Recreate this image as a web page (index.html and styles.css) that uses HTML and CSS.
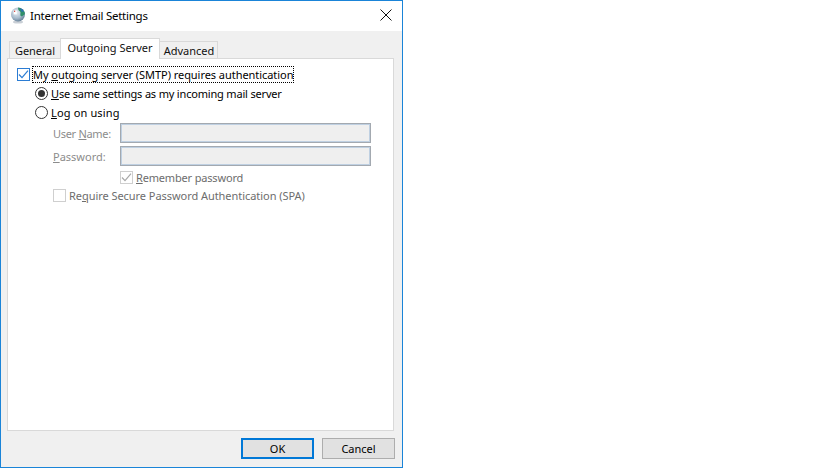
FILE: index.html
```html
<!DOCTYPE html>
<html lang="en">
<head>
<meta charset="utf-8">
<title>Internet Email Settings</title>
<link rel="stylesheet" href="styles.css">
</head>
<body>
<div class="window">
  <header class="titlebar">
    <svg class="app-icon" width="18" height="18" viewBox="0 0 18 18">
      <defs>
        <radialGradient id="globe" cx="0.4" cy="0.35" r="0.75">
          <stop offset="0" stop-color="#e8eef4"/>
          <stop offset="0.55" stop-color="#a9bccd"/>
          <stop offset="1" stop-color="#4f6c86"/>
        </radialGradient>
      </defs>
      <ellipse cx="9" cy="16" rx="5" ry="1.5" fill="#c9cfd6"/>
      <circle cx="9" cy="8.5" r="7" fill="url(#globe)"/>
      <path d="M9 1.6a7 7 0 0 1 6.9 6.4l-3 2.4-1.6-1 .2-3.4L9.4 4z" fill="#2f8f6a"/>
      <path d="M11 2a7 7 0 0 1 4 3.4l-2.4.4z" fill="#2b6fb5"/>
      <rect x="4.6" y="4.4" width="3.2" height="4" fill="#fff"/>
      <rect x="5" y="4.6" width="1.2" height="1.4" fill="#d9534f"/>
    </svg>
    <span class="title">Internet Email Settings</span>
    <svg class="close" width="12" height="12" viewBox="0 0 12 12">
      <path d="M.5.5l11 11M11.5.5l-11 11" stroke="#111" stroke-width="1" fill="none"/>
    </svg>
  </header>
  <main class="body">
    <nav class="tabs">
      <span class="tab tab-general">General</span>
      <span class="tab tab-outgoing active">Outgoing Server</span>
      <span class="tab tab-advanced">Advanced</span>
    </nav>
    <section class="panel">
      <div class="row row-auth">
        <span class="check">
          <svg width="11" height="11" viewBox="0 0 11 11"><path d="M1 5.5l3 3.2L10 1.6" stroke="#2b7cd3" stroke-width="1.2" fill="none"/></svg>
        </span>
        <span class="label focus">My <u>o</u>utgoing server (SMTP) requires authentication</span>
      </div>
      <div class="row row-radio">
        <span class="radio selected"></span>
        <span class="label label-same"><u>U</u>se same settings as my incoming mail server</span>
      </div>
      <div class="row row-radio">
        <span class="radio"></span>
        <span class="label label-logon"><u>L</u>og on using</span>
      </div>
      <div class="row row-field">
        <span class="field-label"><span class="label-user">User <u>N</u>ame:</span></span>
        <span class="input"></span>
      </div>
      <div class="row row-field">
        <span class="field-label"><u>P</u>assword:</span>
        <span class="input"></span>
      </div>
      <div class="row row-remember">
        <span class="check disabled">
          <svg width="11" height="11" viewBox="0 0 11 11"><path d="M1 5.5l3 3.2L10 1.6" stroke="#a8a8a8" stroke-width="1.2" fill="none"/></svg>
        </span>
        <span class="label muted label-remember"><u>R</u>emember password</span>
      </div>
      <div class="row row-spa">
        <span class="check disabled"></span>
        <span class="label muted label-spa">Re<u>q</u>uire Secure Password Authentication (SPA)</span>
      </div>
    </section>
    <footer class="actions">
      <button class="btn default" type="button">OK</button>
      <button class="btn" type="button">Cancel</button>
    </footer>
  </main>
</div>
</body>
</html>
```
FILE: styles.css
```css
* { box-sizing: border-box; }
html, body { margin: 0; height: 100%; background: #fff; }
body { font-family: "Noto Sans", "Open Sans", sans-serif; font-size: 11px; color: #000; overflow: hidden; }
.window { width: 403px; height: 468px; border: 1px solid #1a84d8; display: flex; flex-direction: column; }
.titlebar { height: 30px; flex: none; background: #fff; display: flex; align-items: center; padding: 0 10px 2px 8px; }
.app-icon { flex: none; }
.title { margin-left: 3px; font-size: 11.5px; letter-spacing: -0.25px; flex: 1; }
.body { flex: 1; background: #f0f0f0; display: flex; flex-direction: column; padding: 8px 8px 8px 6px; min-height: 0; }
.tabs { display: flex; height: 19px; padding-left: 2px; align-items: flex-end; flex: none; position: relative; z-index: 1; }
.tab { height: 17px; border: 1px solid #d9d9d9; border-bottom: 0; background: #f0f0f0; line-height: 17px; margin-left: -1px; color: #111; text-align: center; white-space: nowrap; }
.tab:first-child { margin-left: 0; }
.tab-general { width: 52px; letter-spacing: -0.1px; }
.tab-outgoing { width: 100px; }
.tab-advanced { width: 59px; padding-left: 1px; }
.tab.active { height: 21px; background: #fff; line-height: 18px; margin-bottom: -1px; position: relative; z-index: 2; }
.panel { flex: 1; background: #fff; border: 1px solid #d9d9d9; padding: 6px 9px 0; display: flex; flex-direction: column; min-height: 0; }
.row { display: flex; align-items: center; }
.row-auth { height: 18px; }
.row-radio { height: 19px; padding-left: 18px; margin-top: 1px; }
.row-radio + .row-radio { margin-top: 0; }
.check { width: 13px; height: 13px; border: 1px solid #2b7cd3; background: #fff; flex: none; display: flex; align-items: center; justify-content: center; }
.check.disabled { border-color: #cfcfcf; }
.check.disabled svg { display: block; }
.radio { width: 13px; height: 13px; border: 1px solid #333; border-radius: 50%; background: #fff; flex: none; position: relative; }
.radio.selected::after { content: ""; position: absolute; inset: 2px; border-radius: 50%; background: #333; }
.label { margin-left: 3px; white-space: nowrap; }
.focus { outline: 1px dotted #000; letter-spacing: -0.05px; }
.label-same { letter-spacing: -0.18px; }
.label-logon { letter-spacing: 0.15px; }
.label-remember { letter-spacing: -0.17px; }
.label-spa { letter-spacing: -0.05px; }
.label-user { letter-spacing: -0.3px; }
.muted { color: #6d6d6d; }
.row-field { padding-left: 36px; height: 22px; }
.row-field + .row-field { margin-top: 1px; }
.field-label { width: 67px; color: #8c8c8c; flex: none; white-space: nowrap; }
.input { width: 251px; height: 20px; background: #efefef; border: 1px solid #a3a9b0; box-shadow: inset 0 0 0 1px #bfd0e2; flex: none; }
.row-remember { padding-left: 103px; height: 19px; margin-top: 1px; }
.row-spa { padding-left: 36px; height: 16px; }
.actions { flex: none; display: flex; justify-content: flex-end; gap: 8px; padding-top: 7px; margin-right: -1px; }
.btn { width: 73px; height: 21px; background: #e1e1e1; border: 1px solid #adadad; font: inherit; color: #000; padding: 0; }
.btn.default { border: 2px solid #0078d7; }
```
